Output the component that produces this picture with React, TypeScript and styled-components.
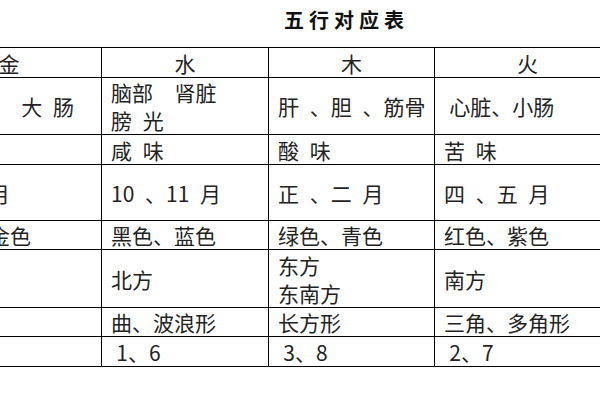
import styled, { createGlobalStyle } from 'styled-components';

const GlobalStyle = createGlobalStyle`
  html, body {
    margin: 0;
    padding: 0;
    background: #fff;
    overflow: hidden;
  }
  #root {
    width: 600px;
    height: 400px;
  }
`;

type Row = {
  h: number;
  cells: string[];
};

// 五行 columns: 金 水 木 火 土 (金 and 土 are cut by the frame)
const widths = [185, 167, 166, 186, 166];

// a narrow space for the cells that start a little further in
const N = '\u2005';

const rows: Row[] = [
  { h: 30, cells: ['金', '水', '木', '火', '土'] },
  { h: 56, cells: ['肺 、   ' + N + N + '大 肠', '脑部  肾脏\n膀 光', '肝 、胆 、筋骨', N + '心脏、小肠', '脾 、胃'] },
  { h: 30, cells: ['辣 味', '咸 味', '酸 味', '苦 味', '甘 味'] },
  { h: 56, cells: ['七、八月', '10 、11 月', '正 、二 月', '四 、五 月', '六 月'] },
  { h: 28, cells: ['白色、金色', '黑色、蓝色', '绿色、青色', '红色、紫色', '黄色'] },
  { h: 58, cells: ['西方', '北方', '东方\n东南方', '南方', '中央'] },
  { h: 28, cells: ['方形', '曲、波浪形', '长方形', '三角、多角形', '正方形'] },
  { h: 30, cells: ['4、9', N + '1、6', N + '3、8', N + '2、7', '5、0'] },
];

export default function App() {
  return (
    <Page>
      <GlobalStyle />
      <Title>五行对应表</Title>
      <Table>
        <colgroup>
          {widths.map((w, i) => (
            <col key={i} style={{ width: w }} />
          ))}
        </colgroup>
        <tbody>
          {rows.map((row, r) => (
            <Tr key={r} $h={row.h}>
              {row.cells.map((text, c) => (
                <Cell key={c} $center={r === 0}>
                  {text}
                </Cell>
              ))}
            </Tr>
          ))}
        </tbody>
      </Table>
    </Page>
  );
}

const Page = styled.div`
  width: 600px;
  height: 400px;
  overflow: hidden;
  background: #fff;
  font-family: 'Noto Sans CJK SC', 'Noto Sans', sans-serif;
  color: #222;
`;

const Title = styled.div`
  height: 47px;
  box-sizing: border-box;
  padding-left: 284px;
  line-height: 40px;
  font-size: 20px;
  font-weight: 700;
  letter-spacing: 5px;
  color: #111;
`;

const Table = styled.table`
  margin-left: -84px;
  border-collapse: collapse;
  table-layout: fixed;
  width: 870px;
`;

const Tr = styled.tr<{ $h: number }>`
  height: ${(p) => p.$h}px;
`;

const Cell = styled.td<{ $center?: boolean }>`
  border: 1px solid #000;
  padding: 0 0 0 ${(p) => (p.$center ? 0 : 9)}px;
  text-align: ${(p) => (p.$center ? 'center' : 'left')};
  vertical-align: middle;
  font-size: 21px;
  line-height: 28px;
  word-spacing: 6px;
  white-space: pre;
  overflow: hidden;
`;
